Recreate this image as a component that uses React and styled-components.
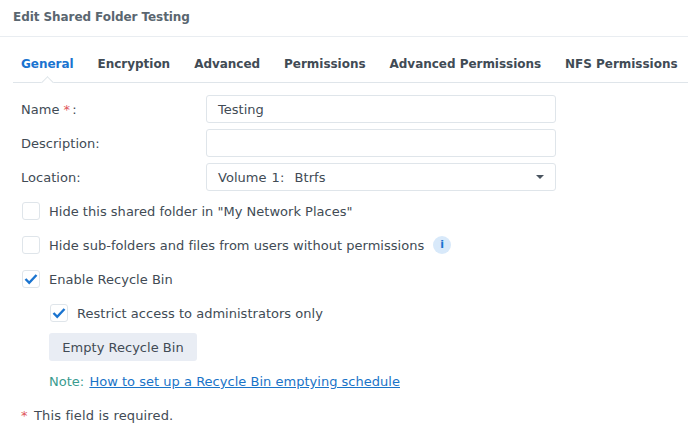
import React from 'react';
import styled, { createGlobalStyle } from 'styled-components';

const Global = createGlobalStyle`
  html, body { margin: 0; padding: 0; background: #fff; }
  body { font-family: "DejaVu Sans", Verdana, sans-serif; font-size: 13px; color: #414b55; letter-spacing: 0.02px; }
`;
const Page = styled.div`
  width: 688px; height: 433px; overflow: hidden; display: flex; flex-direction: column;
`;
const Header = styled.div`
  height: 37px; box-sizing: border-box; padding: 0 13px 2px; display: flex; align-items: center;
  border-bottom: 1px solid #e9edf1; font-size: 12px; font-weight: 700; letter-spacing: -0.07px; color: #5a6670; flex: none;
`;
const Tabs = styled.div`
  position: relative; height: 46px; box-sizing: border-box; margin-left: 13px; padding: 14px 8px 6px;
  display: flex; align-items: center; gap: 24px; border-bottom: 1px solid #dfe5ea; flex: none;
  white-space: nowrap;
`;
const Tab = styled.div`
  font-size: 12px; font-weight: 700; letter-spacing: -0.03px; color: ${p => (p.$active ? '#1a74d0' : '#414b55')};
`;
const Caret = styled.div`
  position: absolute; left: 30px; bottom: -1px; width: 8px; height: 8px; background: #fff;
  border-top: 1px solid #dfe5ea; border-left: 1px solid #dfe5ea; transform: translateY(4px) rotate(45deg);
`;
const Form = styled.div`
  padding: 12px 0 0 21px; display: flex; flex-direction: column;
`;
const Field = styled.div`
  display: flex; align-items: center; height: 28px; margin-bottom: 6px;
`;
const Label = styled.div` width: 185px; flex: none; `;
const Req = styled.span` color: #e0565b; margin-right: ${p => p.$gap ?? 0}px; `;
const Input = styled.div`
  width: 350px; height: 28px; box-sizing: border-box; border: 1px solid #dfe5ea; border-radius: 3px;
  padding: 0 11px; display: flex; align-items: center; justify-content: space-between; color: #414b55;
  word-spacing: 1px;
`;
const Arrow = styled.span`
  width: 0; height: 0; border-left: 4.5px solid transparent; border-right: 4.5px solid transparent;
  border-top: 4px solid #4a5560;
`;
const CheckRow = styled.div`
  display: flex; align-items: center; gap: 9px; height: 18px; margin-top: ${p => p.$top ?? 16}px;
  margin-left: ${p => (p.$nested ? 29 : 1)}px; line-height: 18px;
`;
const CheckText = styled.span` padding-top: 2px; display: inline-flex; align-items: center; gap: 9px; `;
const Box = styled.div`
  width: 18px; height: 18px; box-sizing: border-box; border: 1px solid #dfe5ea; border-radius: 3px;
  background: #fff; display: flex; align-items: center; justify-content: center; flex: none;
`;
const Info = styled.span`
  width: 18px; height: 18px; border-radius: 50%; background: #d8e9fa; display: inline-flex;
  align-items: center; justify-content: center; color: #1a74d0; font-size: 11px; font-weight: 700;
  margin-top: -2px;
`;
const Button = styled.div`
  margin: 11px 0 0 28px; width: 148px; height: 28px; border-radius: 3px; background: #e9edf4;
  display: flex; align-items: center; justify-content: center; color: #414b55;
`;
const Note = styled.div`
  margin: 12px 0 0 28px; line-height: 18px; color: #3b9c8f;
`;
const A = styled.a` color: #1a74c8; text-decoration: underline; margin-left: 1px; `;
const Footer = styled.div`
  margin-top: 16px; line-height: 18px; letter-spacing: 0.15px;
`;
const FooterText = styled.span` margin-left: 2px; `;

const Check = ({ on }) => (
  <Box>
    {on && (
      <svg width="14" height="12" viewBox="0 0 14 12">
        <path d="M1.5 6 L5.2 9.8 L12.5 2" fill="none" stroke="#1a74d0" strokeWidth="2.4" />
      </svg>
    )}
  </Box>
);

export default function App() {
  return (
    <Page>
      <Global />
      <Header>Edit Shared Folder Testing</Header>
      <Tabs>
        <Tab $active>General</Tab>
        <Tab>Encryption</Tab>
        <Tab>Advanced</Tab>
        <Tab>Permissions</Tab>
        <Tab>Advanced Permissions</Tab>
        <Tab>NFS Permissions</Tab>
        <Caret />
      </Tabs>
      <Form>
        <Field><Label>Name <Req $gap={2}>*</Req>:</Label><Input>Testing</Input></Field>
        <Field><Label>Description:</Label><Input /></Field>
        <Field><Label>Location:</Label><Input>Volume 1:&nbsp; Btrfs<Arrow /></Input></Field>
        <CheckRow $top={5}><Check /><CheckText>Hide this shared folder in "My Network Places"</CheckText></CheckRow>
        <CheckRow><Check /><CheckText>Hide sub-folders and files from users without permissions<Info>i</Info></CheckText></CheckRow>
        <CheckRow><Check on /><CheckText>Enable Recycle Bin</CheckText></CheckRow>
        <CheckRow $nested><Check on /><CheckText>Restrict access to administrators only</CheckText></CheckRow>
        <Button>Empty Recycle Bin</Button>
        <Note>Note: <A href="#">How to set up a Recycle Bin emptying schedule</A></Note>
        <Footer><Req>*</Req><FooterText> This field is required.</FooterText></Footer>
      </Form>
    </Page>
  );
}
